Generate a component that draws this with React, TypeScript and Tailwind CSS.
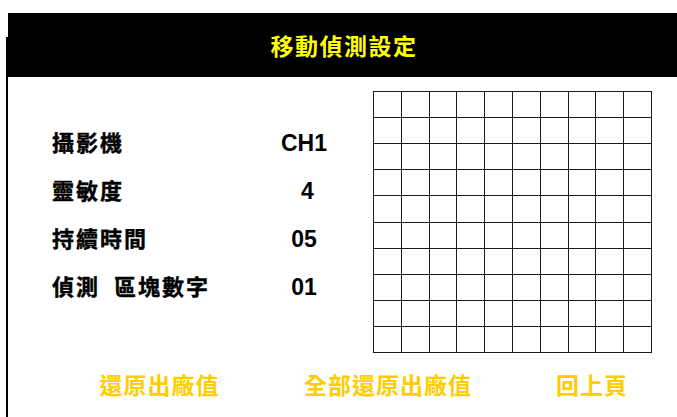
import React from "react";

const rows = [
  { label: "攝影機", value: "CH1", shift: "" },
  { label: "靈敏度", value: "4", shift: "pl-[7px]" },
  { label: "持續時間", value: "05", shift: "" },
  { label: "偵測  區塊數字", value: "01", shift: "" },
];

const cjk = "font-['Noto_Sans_CJK_TC','Noto_Sans_CJK_SC',sans-serif]";

export default function App() {
  return (
    <div className="w-[677px] h-[417px] bg-white overflow-hidden flex flex-col">
      <div className="ml-[6px] mt-[37px] h-[380px] border-l-2 border-black flex flex-col">
        {/* title bar */}
        <div className="-mt-[24px] h-[64px] shrink-0 bg-black flex items-center justify-center">
          <h1 className={`${cjk} text-[23px] font-bold tracking-[1.5px] text-[#ffff00] leading-none pl-[3px]`}>
            移動偵測設定
          </h1>
        </div>

        <div className="flex mt-[14px]">
          {/* settings list */}
          <div className="w-[365px] pt-[26px] pl-[44px]">
            {rows.map((r) => (
              <div key={r.label} className="h-[48px] flex items-center">
                <span className={`${cjk} w-[226px] text-[22px] font-bold tracking-[2px] text-black whitespace-pre [-webkit-text-stroke:0.4px_black]`}>
                  {r.label}
                </span>
                <span
                  className={`w-[52px] text-center font-['Liberation_Sans',Arial,sans-serif] text-[23px] font-bold text-black pt-[4px] ${r.shift}`}
                >
                  {r.value}
                </span>
              </div>
            ))}
          </div>

          {/* detection area grid */}
          <div className="grid grid-cols-10 grid-rows-10 w-[279px] h-[262px] border-t border-l border-[#1a1a1a]">
            {Array.from({ length: 100 }).map((_, i) => (
              <div key={i} className="border-r border-b border-[#1a1a1a]" />
            ))}
          </div>
        </div>

        {/* actions */}
        <div className={`${cjk} flex mt-[16px] h-[30px] items-center pl-[72px] text-[23px] font-bold text-[#ffcc00] tracking-[1px]`}>
          <button className="w-[159px] text-center">還原出廠值</button>
          <button className="w-[298px] text-center">全部還原出廠值</button>
          <button className="w-[110px] text-center">回上頁</button>
        </div>
      </div>
    </div>
  );
}
